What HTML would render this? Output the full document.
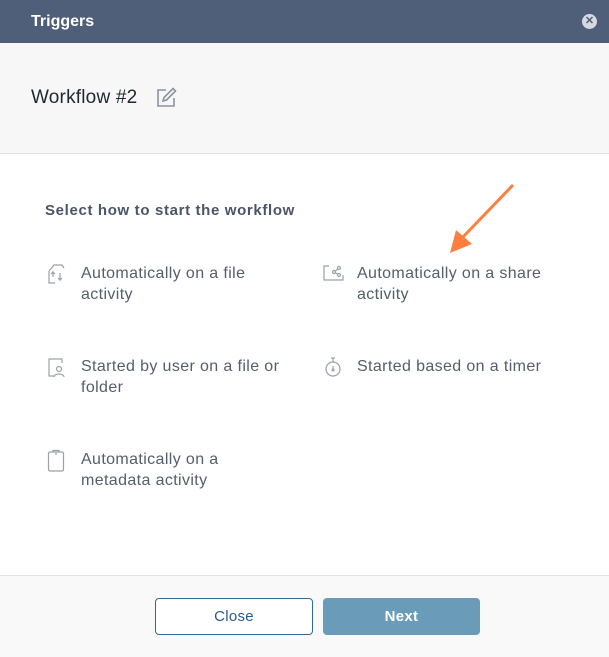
<!DOCTYPE html>
<html><head><style>
*{margin:0;padding:0;box-sizing:border-box}
body{width:609px;height:657px;background:#fff;font-family:"Liberation Sans",sans-serif;position:relative;overflow:hidden}
.hdr{position:absolute;left:0;top:0;width:609px;height:43px;background:#4f5f7a;color:#fff;font-weight:bold;font-size:16px;line-height:43px;padding-left:31px}
.x{position:absolute;right:12px;top:14px;width:15px;height:15px;border-radius:50%;background:#d5d9e0;color:#4f5f7a;font-size:11px;line-height:15px;text-align:center;font-weight:bold}
.sub{position:absolute;left:0;top:43px;width:609px;height:111px;background:#f7f7f7;border-bottom:1px solid #e2e2e2}
.sub .t{position:absolute;left:31px;top:44px;font-size:19px;color:#1f2733;letter-spacing:0.2px}
.h2{position:absolute;left:45px;top:202px;font-size:15px;font-weight:bold;color:#4a5568;letter-spacing:0.65px}
.it{position:absolute;font-size:16px;color:#555e6b;line-height:21px;width:260px;letter-spacing:0.38px;white-space:nowrap}
.ic{position:absolute}
.ftr{position:absolute;left:0;top:575px;width:609px;height:82px;background:#f9f9f9;border-top:1px solid #e2e2e2}
.b{position:absolute;top:598px;height:37px;border-radius:4px;font-size:15px;text-align:center;line-height:38px}
</style></head><body>
<div class="hdr">Triggers<div class="x">✕</div></div>
<div class="sub"><div class="t">Workflow #2</div>
<svg style="position:absolute;left:156px;top:44px" width="21" height="21" viewBox="0 0 21 21" fill="none" stroke="#8a93a3" stroke-width="1.6"><path d="M10 3H2v16h16v-8"/><path d="M17 1.5l2.5 2.5-9 9-3.5 1 1-3.5z"/></svg>
</div>
<div class="h2">Select how to start the workflow</div>
<svg class="ic" style="left:46px;top:263px" width="22" height="22" viewBox="0 0 22 22" fill="none" stroke="#9aa1ac" stroke-width="1.2"><path d="M3 8l5-6h8l2 3"/><path d="M3 8v12h6"/><path d="M7 14V9l2 2M7 9L5 11"/><path d="M14 10v7l-2-2M14 17l2-2"/></svg>
<div class="it" style="left:81px;top:263px">Automatically on a file<br>activity</div>
<svg class="ic" style="left:46px;top:357px" width="22" height="22" viewBox="0 0 22 22" fill="none" stroke="#9aa1ac" stroke-width="1.2"><path d="M7 2H3v17h5"/><path d="M7 2h9v4"/><circle cx="13" cy="12" r="2.5"/><path d="M8 20c0-4 10-4 10 0"/></svg>
<div class="it" style="left:81px;top:356px">Started by user on a file or<br>folder</div>
<svg class="ic" style="left:46px;top:449px" width="22" height="24" viewBox="0 0 22 24" fill="none" stroke="#9aa1ac" stroke-width="1.2"><rect x="2.5" y="3" width="15" height="19" rx="1.5"/><path d="M7 3V1.5h6V3M9 5h2"/></svg>
<div class="it" style="left:81px;top:449px">Automatically on a<br>metadata activity</div>
<svg class="ic" style="left:323px;top:264px" width="22" height="18" viewBox="0 0 22 18" fill="none" stroke="#9aa1ac" stroke-width="1.2"><path d="M6 2H1v14h19v-5"/><circle cx="11" cy="8" r="1.5"/><circle cx="16" cy="4" r="1.5"/><circle cx="16" cy="11" r="1.5"/><path d="M12.3 7.2l2.4-2.2M12.3 8.8l2.4 1.5"/></svg>
<div class="it" style="left:357px;top:263px">Automatically on a share<br>activity</div>
<svg class="ic" style="left:323px;top:356px" width="22" height="22" viewBox="0 0 22 22" fill="none" stroke="#9aa1ac" stroke-width="1.2"><circle cx="10" cy="13" r="7"/><path d="M8 2h4M10 2v4M10 10v3"/><circle cx="10" cy="14" r="1"/></svg>
<div class="it" style="left:357px;top:356px">Started based on a timer</div>
<svg style="position:absolute;left:440px;top:180px" width="80" height="80" viewBox="0 0 80 80"><path d="M73 5L22 58" stroke="#ff7f41" stroke-width="3"/><path d="M10 73l6-23 16 14z" fill="#ff7f41"/></svg>
<div class="ftr"></div>
<div class="b" style="left:155px;width:158px;border:1.5px solid #2d6a9a;background:#fff;color:#2d5a85;line-height:36px;letter-spacing:0.3px">Close</div>
<div class="b" style="left:323px;width:157px;background:#6a9cb9;color:#fff;font-weight:bold;letter-spacing:0.3px">Next</div>
</body></html>
